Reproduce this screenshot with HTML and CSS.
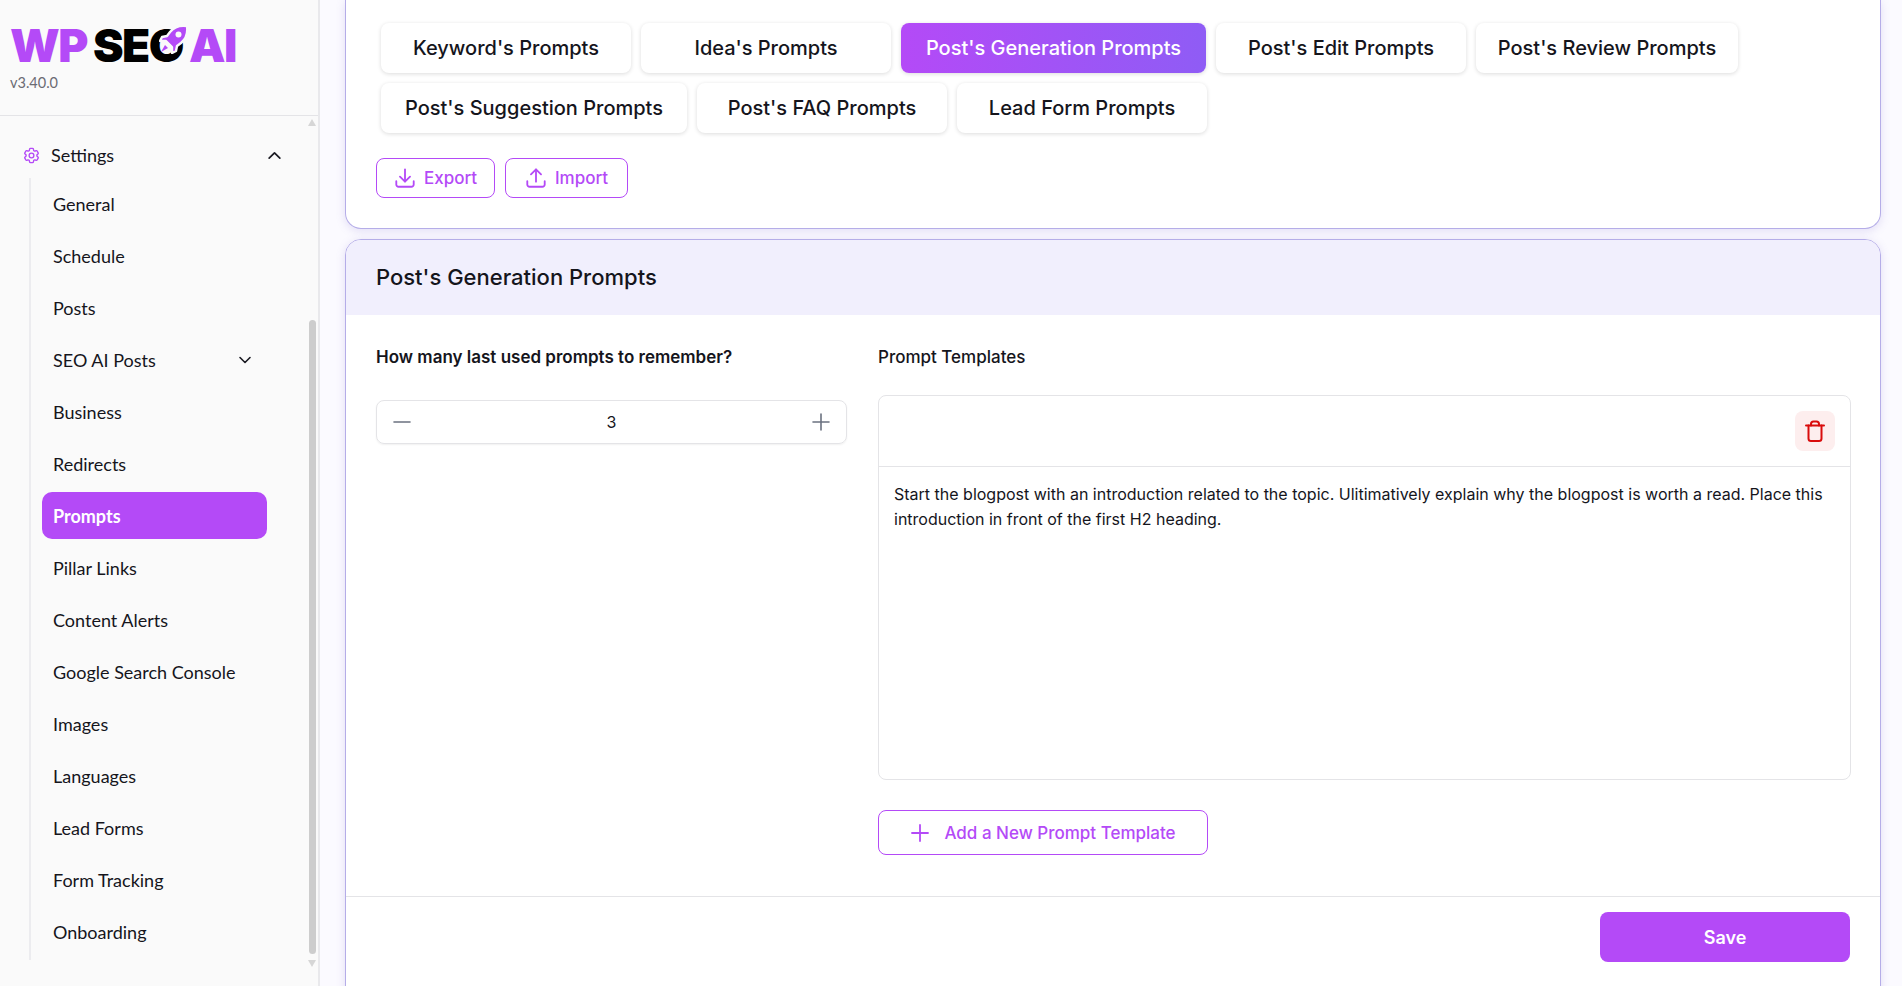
FILE: index.html
```html
<!DOCTYPE html>
<html lang="en">
<head>
    <meta charset="UTF-8">
    <meta name="viewport" content="width=device-width, initial-scale=1.0">
    <title>Prompts - WP SEO AI</title>
    <link rel="stylesheet" href="styles.css">
</head>
<body>
    <div class="app">
        <aside class="sidebar">
            <div class="brand">
                <div class="logo">
                    <span class="logo-purple">WP</span>
                    <span class="logo-black">SEO</span>
                    <span class="logo-purple">AI</span>
                    <svg class="logo-rocket" viewBox="0 0 30 30">
                        <path d="M28 2c-7-1-13 1-17 6l-3 4-5 1-2 4 6 0 6 6 0 6 4-2 1-5 4-3c5-4 7-10 6-17Z" fill="#b44af7" stroke="#fafafa" stroke-width="2.4" stroke-linejoin="round"/>
                        <circle cx="19.5" cy="10.5" r="3" fill="#fafafa"/>
                        <path d="M6 21l-4 7 7-4Z" fill="#b44af7"/>
                    </svg>
                </div>
                <div class="version">v3.40.0</div>
            </div>

            <nav class="nav">
                <div class="nav-head">
                    <svg class="gear" viewBox="0 0 24 24" fill="none" stroke="#b44af7" stroke-width="1.7">
                        <path d="M9.594 3.94c.09-.542.56-.94 1.11-.94h2.593c.55 0 1.02.398 1.11.94l.213 1.281c.063.374.313.686.645.87.074.04.147.083.22.127.325.196.72.257 1.075.124l1.217-.456a1.125 1.125 0 0 1 1.37.49l1.296 2.247a1.125 1.125 0 0 1-.26 1.431l-1.003.827c-.293.241-.438.613-.43.992a7.723 7.723 0 0 1 0 .255c-.008.378.137.75.43.991l1.004.827c.424.35.534.955.26 1.43l-1.298 2.247a1.125 1.125 0 0 1-1.369.491l-1.217-.456c-.355-.133-.75-.072-1.076.124a6.47 6.47 0 0 1-.22.128c-.331.183-.581.495-.644.869l-.213 1.281c-.09.543-.56.94-1.11.94h-2.594c-.55 0-1.019-.398-1.11-.94l-.213-1.281c-.062-.374-.312-.686-.644-.87a6.52 6.52 0 0 1-.22-.127c-.325-.196-.72-.257-1.076-.124l-1.217.456a1.125 1.125 0 0 1-1.369-.49l-1.297-2.247a1.125 1.125 0 0 1 .26-1.431l1.004-.827c.292-.24.437-.613.43-.991a6.932 6.932 0 0 1 0-.255c.007-.38-.138-.751-.43-.992l-1.004-.827a1.125 1.125 0 0 1-.26-1.43l1.297-2.247a1.125 1.125 0 0 1 1.37-.491l1.216.456c.356.133.751.072 1.076-.124.072-.044.146-.086.22-.128.332-.183.582-.495.644-.869l.214-1.28Z"/>
                        <circle cx="12" cy="12" r="3"/>
                    </svg>
                    <span class="nav-title">Settings</span>
                    <svg class="chevron chevron-head" viewBox="0 0 14 14" fill="none" stroke="#1a1a22" stroke-width="1.6" stroke-linecap="round" stroke-linejoin="round"><path d="M2 9.5 7 4.5l5 5"/></svg>
                </div>
                <ul class="nav-list">
                    <li class="nav-item">General</li>
                    <li class="nav-item">Schedule</li>
                    <li class="nav-item">Posts</li>
                    <li class="nav-item nav-item-sub">SEO AI Posts
                        <svg class="chevron" viewBox="0 0 14 14" fill="none" stroke="#1a1a22" stroke-width="1.6" stroke-linecap="round" stroke-linejoin="round"><path d="M2 4.5l5 5 5-5"/></svg>
                    </li>
                    <li class="nav-item">Business</li>
                    <li class="nav-item">Redirects</li>
                    <li class="nav-item active">Prompts</li>
                    <li class="nav-item">Pillar Links</li>
                    <li class="nav-item">Content Alerts</li>
                    <li class="nav-item">Google Search Console</li>
                    <li class="nav-item">Images</li>
                    <li class="nav-item">Languages</li>
                    <li class="nav-item">Lead Forms</li>
                    <li class="nav-item">Form Tracking</li>
                    <li class="nav-item">Onboarding</li>
                </ul>
            </nav>

            <div class="scroll-up"></div>
            <div class="scroll-thumb"></div>
            <div class="scroll-down"></div>
        </aside>

        <main class="main">
            <section class="card card-tabs">
                <div class="tabs">
                    <button class="tab">Keyword's Prompts</button>
                    <button class="tab">Idea's Prompts</button>
                    <button class="tab tab-active tab-305">Post's Generation Prompts</button>
                    <button class="tab">Post's Edit Prompts</button>
                    <button class="tab tab-262">Post's Review Prompts</button>
                </div>
                <div class="tabs">
                    <button class="tab tab-306">Post's Suggestion Prompts</button>
                    <button class="tab">Post's FAQ Prompts</button>
                    <button class="tab">Lead Form Prompts</button>
                </div>
                <div class="actions">
                    <button class="btn-outline btn-export">
                        <svg class="btn-icon" viewBox="0 0 24 24" fill="none" stroke="#b44af7" stroke-width="2" stroke-linecap="round" stroke-linejoin="round"><path d="M2.5 15.5v3.5a2.5 2.5 0 0 0 2.5 2.5h14a2.5 2.5 0 0 0 2.5-2.5v-3.5"/><path d="M12 2.5v13"/><path d="M6.5 10.5 12 16l5.500-5.500"/></svg>
                        Export
                    </button>
                    <button class="btn-outline btn-import">
                        <svg class="btn-icon" viewBox="0 0 24 24" fill="none" stroke="#b44af7" stroke-width="2" stroke-linecap="round" stroke-linejoin="round"><path d="M2.500 15.500v3.500a2.500 2.500 0 0 0 2.500 2.500h14a2.500 2.500 0 0 0 2.500-2.500v-3.500"/><path d="M12 16V3"/><path d="M6.500 8 12 2.500 17.500 8"/></svg>
                        Import
                    </button>
                </div>
            </section>

            <section class="card card-form">
                <h2 class="form-title">Post's Generation Prompts</h2>
                <div class="form-body">
                    <div class="col-left">
                        <label class="form-label form-label-strong">How many last used prompts to remember?</label>
                        <div class="stepper">
                            <svg class="step-icon" viewBox="0 0 20 20" stroke="#6b7280" stroke-width="1.6" stroke-linecap="round"><path d="M2 10h16"/></svg>
                            <span class="step-value">3</span>
                            <svg class="step-icon" viewBox="0 0 20 20" stroke="#6b7280" stroke-width="1.6" stroke-linecap="round"><path d="M2 10h16M10 2v16"/></svg>
                        </div>
                    </div>
                    <div class="col-right">
                        <label class="form-label">Prompt Templates</label>
                        <div class="template">
                            <div class="template-head">
                                <button class="btn-delete">
                                    <svg viewBox="0 0 24 24" width="24" height="24" fill="none" stroke="#d90c0c" stroke-width="2" stroke-linecap="round" stroke-linejoin="round"><path d="M3 6.500h18"/><path d="M8 6.500V5a2.500 2.500 0 0 1 2.500-2.500h3A2.500 2.500 0 0 1 16 5v1.500"/><path d="M5.500 6.500v13a2.500 2.500 0 0 0 2.500 2.500h8a2.500 2.500 0 0 0 2.500-2.500v-13"/></svg>
                                </button>
                            </div>
                            <p class="template-text">Start the blogpost with an introduction related to the topic. Ulitimatively explain why the blogpost is worth a read. Place this introduction in front of the first H2 heading.</p>
                        </div>
                        <button class="btn-outline btn-add">
                            <svg class="add-icon" viewBox="0 0 20 20" stroke="#b44af7" stroke-width="1.8" stroke-linecap="round"><path d="M2 10h16M10 2v16"/></svg>
                            Add a New Prompt Template
                        </button>
                    </div>
                </div>
                <div class="form-footer">
                    <button class="btn-save">Save</button>
                </div>
            </section>
        </main>
    </div>
</body>
</html>
```

FILE: styles.css
```css
* {
    box-sizing: border-box;
}

body {
    margin: 0;
    background-color: #fbfaff;
    color: #15151c;
    font-family: Inter, "Open Sans", sans-serif;
}

button {
    font-family: inherit;
    cursor: pointer;
}

.app {
    display: flex;
    height: 100vh;
    overflow: hidden;
}

/* sidebar */
.sidebar {
    position: relative;
    flex: 0 0 320px;
    background-color: #fafafa;
    border-right: 2px solid #e9e9ec;
}

.brand {
    height: 116px;
    padding: 24px 0 0 10px;
    border-bottom: 1px solid #e4e4e7;
}

.logo {
    position: relative;
    display: flex;
    gap: 6px;
    height: 42px;
    font-size: 46px;
    font-weight: 900;
    line-height: 42px;
    letter-spacing: -1.5px;
}

.logo-purple {
    color: #b44af7;
}

.logo-black {
    color: #000;
}

.logo-rocket {
    position: absolute;
    left: 149px;
    top: 0;
    width: 30px;
    height: 30px;
}

.version {
    margin-top: 8px;
    color: #6b6b73;
    font-family: Lato, sans-serif;
    font-size: 14.5px;
}

.nav {
    padding-top: 22px;
    font-family: Lato, sans-serif;
    font-size: 18px;
}

.nav-head {
    display: flex;
    align-items: center;
    height: 34px;
    padding-left: 22px;
    padding-right: 36px;
}

.gear {
    width: 19px;
    height: 19px;
}

.nav-title {
    flex: 1;
    margin-left: 10px;
}

.chevron {
    width: 14px;
    height: 14px;
}

.chevron-head {
    width: 15px;
    height: 15px;
}

.nav-list {
    list-style: none;
    margin: 6px 0 0 29px;
    padding: 2px 0 5px;
    border-left: 2px solid #ececef;
}

.nav-item {
    display: flex;
    align-items: center;
    justify-content: space-between;
    width: 225px;
    height: 47px;
    margin: 0 0 5px 11px;
    padding: 0 15px 0 11px;
    border-radius: 10px;
}

.nav-item:last-child {
    margin-bottom: 0;
}

.nav-item.active {
    background-color: #b44af7;
    color: #fff;
    font-weight: 700;
}

.scroll-thumb {
    position: absolute;
    left: 309px;
    top: 320px;
    width: 7px;
    height: 634px;
    border-radius: 4px;
    background-color: #cdcdcd;
}

.scroll-up,
.scroll-down {
    position: absolute;
    left: 308px;
    width: 0;
    height: 0;
    border-left: 4.5px solid transparent;
    border-right: 4.5px solid transparent;
}

.scroll-up {
    top: 119px;
    border-bottom: 7px solid #d6d6d6;
}

.scroll-down {
    top: 960px;
    border-top: 7px solid #d6d6d6;
}

/* main area */
.main {
    flex: 1;
    padding: 0 21px 0 25px;
    min-width: 0;
}

.card {
    background-color: #fff;
    border: 1px solid #b5ade8;
    box-shadow: 0 2px 10px rgba(110, 90, 200, 0.18);
}

.card-tabs {
    height: 229px;
    padding: 23px 30px 0 35px;
    border-top: none;
    border-radius: 0 0 16px 16px;
}

.tabs {
    display: flex;
    gap: 10px;
    margin-bottom: 10px;
}

.tab {
    min-width: 250px;
    height: 50px;
    padding: 0 10px;
    background-color: #fff;
    border: none;
    border-radius: 8px;
    box-shadow: 0 1px 4px rgba(0, 0, 0, 0.14);
    color: #15151c;
    font-size: 20px;
    font-weight: 500;
}

.tab-305 {
    min-width: 305px;
}

.tab-306 {
    min-width: 306px;
}

.tab-262 {
    min-width: 262px;
}

.tab-active {
    background: linear-gradient(90deg, #b44af7, #8f5cf5);
    color: #fff;
}

.actions {
    display: flex;
    gap: 10px;
    margin: 25px 0 0 -5px;
}

.btn-outline {
    display: flex;
    align-items: center;
    justify-content: center;
    height: 40px;
    background-color: #fff;
    border: 1px solid #b44af7;
    border-radius: 8px;
    color: #b44af7;
    font-size: 17px;
    font-weight: 500;
}

.btn-export {
    width: 119px;
}

.btn-import {
    width: 123px;
}

.btn-icon {
    width: 22px;
    height: 22px;
    margin-right: 8px;
}

.card-form {
    height: 800px;
    margin-top: 10px;
    border-radius: 16px 16px 0 0;
    overflow: hidden;
}

.form-title {
    height: 75px;
    margin: 0;
    padding: 0 30px;
    background-color: #f1effd;
    font-size: 22px;
    font-weight: 500;
    line-height: 74px;
}

.form-body {
    display: grid;
    grid-template-columns: 471px 1fr;
    column-gap: 31px;
    padding: 30px 29px 41px 30px;
    border-bottom: 1px solid #e4e4e7;
}

.form-label {
    display: block;
    height: 24px;
    font-size: 17px;
    font-weight: 500;
    line-height: 24px;
}

.form-label-strong {
    font-weight: 600;
}

.stepper {
    display: flex;
    align-items: center;
    justify-content: space-between;
    height: 44px;
    margin-top: 31px;
    padding: 0 15px;
    border: 1px solid #e4e4e7;
    border-radius: 8px;
    box-shadow: 0 1px 2px rgba(0, 0, 0, 0.06);
}

.step-icon {
    width: 20px;
    height: 20px;
}

.step-value {
    font-size: 16px;
}

.template {
    height: 385px;
    margin-top: 26px;
    border: 1px solid #e4e4e7;
    border-radius: 8px;
}

.template-head {
    display: flex;
    justify-content: flex-end;
    align-items: center;
    height: 71px;
    padding-right: 15px;
    border-bottom: 1px solid #e4e4e7;
}

.btn-delete {
    display: flex;
    align-items: center;
    justify-content: center;
    width: 40px;
    height: 40px;
    padding: 0;
    background-color: #fdeeee;
    border: none;
    border-radius: 8px;
}

.template-text {
    margin: 15px 15px 0;
    font-size: 16px;
    line-height: 25px;
}

.btn-add {
    width: 330px;
    height: 45px;
    margin-top: 30px;
}

.add-icon {
    width: 20px;
    height: 20px;
    margin-right: 14px;
}

.form-footer {
    display: flex;
    justify-content: flex-end;
    padding: 15px 30px;
}

.btn-save {
    width: 250px;
    height: 50px;
    background-color: #b44af7;
    border: none;
    border-radius: 8px;
    color: #fff;
    font-size: 18px;
    font-weight: 600;
}
```
